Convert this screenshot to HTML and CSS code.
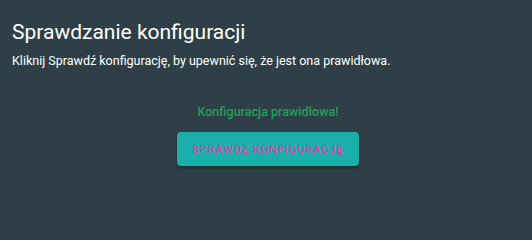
FILE: index.html
```html
<!DOCTYPE html>
<html lang="pl">
<head>
<meta charset="utf-8">
<link rel="stylesheet" href="styles.css">
</head>
<body>
<div class="page">
  <h1 class="title">Sprawdzanie konfiguracji</h1>
  <p class="desc">Kliknij Sprawdź konfigurację, by upewnić się, że jest ona prawidłowa.</p>
  <div class="result">
    <p class="ok">Konfiguracja prawidłowa!</p>
    <button class="btn">Sprawdź konfigurację</button>
  </div>
</div>
</body>
</html>
```
FILE: styles.css
```css
html, body {
  margin: 0;
  padding: 0;
  background: #2e3f47;
  height: 100%;
}
body {
  font-family: Roboto, "Liberation Sans", sans-serif;
  color: #ffffff;
}
.page {
  padding: 18px 12px 0 12px;
}
.title {
  margin: 0;
  font-size: 21px;
  font-weight: 400;
  line-height: 28px;
}
.desc {
  margin: 6px 0 0 0;
  font-size: 12.5px;
  line-height: 18px;
}
.result {
  display: flex;
  flex-direction: column;
  align-items: center;
  margin-top: 33px;
  padding-left: 4px;
}
.ok {
  margin: 0;
  color: #21a05b;
  font-size: 12.5px;
  font-weight: 500;
  line-height: 18px;
}
.btn {
  margin-top: 11px;
  width: 182px;
  height: 34px;
  border: none;
  border-radius: 4px;
  background: #1aafab;
  color: #e23ca7;
  font-family: Roboto, "Liberation Sans", sans-serif;
  font-size: 11px;
  font-weight: 500;
  letter-spacing: 0.9px;
  text-transform: uppercase;
  box-shadow: 0 2px 3px rgba(0,0,0,0.3);
  padding: 0;
}
```
